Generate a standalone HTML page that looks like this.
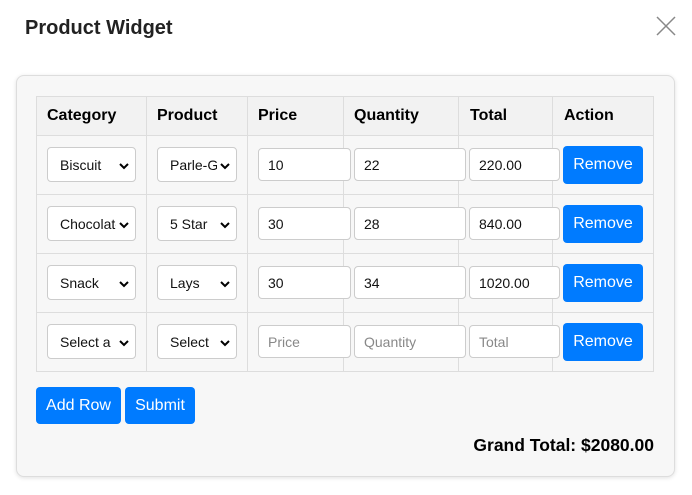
<!DOCTYPE html>
<html><head><style>
*{box-sizing:border-box;margin:0;padding:0}
body{width:692px;height:495px;background:#fff;font-family:"Liberation Sans",Arial,sans-serif;position:relative;overflow:hidden}
.a{position:absolute}
.title{left:25px;top:17px;font-size:20px;font-weight:bold;color:#222}
.card{left:16px;top:75px;width:659px;height:402px;background:#f7f7f7;border:1px solid #ddd;border-radius:8px;box-shadow:0 1px 4px rgba(0,0,0,.12)}
.hl{background:#ddd}
.th{font-weight:bold;font-size:16px;color:#000;top:107px}
.sel{height:35px;border:1px solid #ccc;border-radius:4px;background:#fff;font-size:14px;color:#111;padding-left:12px;line-height:34px;white-space:nowrap}
.sel span{display:inline-block;overflow:hidden;vertical-align:top}
.c span{width:56px}.p span{width:47px}
.sel svg{position:absolute;right:6px;top:14px}
.inp{height:33px;border:1px solid #ccc;border-radius:4px;background:#fff;font-size:14px;color:#111;padding-left:9px;line-height:33px}
.ph{color:#888}
.btn{background:#007bff;color:#fff;border-radius:4px;font-size:16px;text-align:center}
</style></head><body>
<div class="a title">Product Widget</div>
<svg class="a" style="left:656px;top:16px" width="20" height="20"><path d="M1 1L19 19M19 1L1 19" stroke="#888" stroke-width="1.5"/></svg>
<div class="a card"></div>
<div class="a" style="left:36px;top:96px;width:618px;height:40px;background:#f2f2f2"></div>
<div class="a hl" style="left:36px;top:96px;width:618px;height:1px"></div>
<div class="a hl" style="left:36px;top:135px;width:618px;height:1px"></div>
<div class="a hl" style="left:36px;top:194px;width:618px;height:1px"></div>
<div class="a hl" style="left:36px;top:253px;width:618px;height:1px"></div>
<div class="a hl" style="left:36px;top:312px;width:618px;height:1px"></div>
<div class="a hl" style="left:36px;top:371px;width:618px;height:1px"></div>
<div class="a hl" style="left:36px;top:96px;width:1px;height:276px"></div>
<div class="a hl" style="left:146px;top:96px;width:1px;height:276px"></div>
<div class="a hl" style="left:247px;top:96px;width:1px;height:276px"></div>
<div class="a hl" style="left:343px;top:96px;width:1px;height:276px"></div>
<div class="a hl" style="left:458px;top:96px;width:1px;height:276px"></div>
<div class="a hl" style="left:552px;top:96px;width:1px;height:276px"></div>
<div class="a hl" style="left:653px;top:96px;width:1px;height:276px"></div>
<div class="a th" style="left:47px">Category</div>
<div class="a th" style="left:157px">Product</div>
<div class="a th" style="left:258px">Price</div>
<div class="a th" style="left:354px">Quantity</div>
<div class="a th" style="left:470px">Total</div>
<div class="a th" style="left:564px">Action</div>

<div class="a sel c" style="left:47px;top:147px;width:89px"><span>Biscuit</span><svg width="10" height="8"><path d="M1 2L5 6L9 2" stroke="#000" stroke-width="2" fill="none"/></svg></div>
<div class="a sel p" style="left:157px;top:147px;width:80px"><span>Parle-G</span><svg width="10" height="8"><path d="M1 2L5 6L9 2" stroke="#000" stroke-width="2" fill="none"/></svg></div>
<div class="a inp" style="left:258px;top:148px;width:93px">10</div>
<div class="a inp" style="left:354px;top:148px;width:112px">22</div>
<div class="a inp" style="left:469px;top:148px;width:91px">220.00</div>
<div class="a btn" style="left:563px;top:146px;width:80px;height:38px;line-height:38px">Remove</div>

<div class="a sel c" style="left:47px;top:206px;width:89px"><span>Chocolate</span><svg width="10" height="8"><path d="M1 2L5 6L9 2" stroke="#000" stroke-width="2" fill="none"/></svg></div>
<div class="a sel p" style="left:157px;top:206px;width:80px"><span>5 Star</span><svg width="10" height="8"><path d="M1 2L5 6L9 2" stroke="#000" stroke-width="2" fill="none"/></svg></div>
<div class="a inp" style="left:258px;top:207px;width:93px">30</div>
<div class="a inp" style="left:354px;top:207px;width:112px">28</div>
<div class="a inp" style="left:469px;top:207px;width:91px">840.00</div>
<div class="a btn" style="left:563px;top:205px;width:80px;height:38px;line-height:38px">Remove</div>

<div class="a sel c" style="left:47px;top:265px;width:89px"><span>Snack</span><svg width="10" height="8"><path d="M1 2L5 6L9 2" stroke="#000" stroke-width="2" fill="none"/></svg></div>
<div class="a sel p" style="left:157px;top:265px;width:80px"><span>Lays</span><svg width="10" height="8"><path d="M1 2L5 6L9 2" stroke="#000" stroke-width="2" fill="none"/></svg></div>
<div class="a inp" style="left:258px;top:266px;width:93px">30</div>
<div class="a inp" style="left:354px;top:266px;width:112px">34</div>
<div class="a inp" style="left:469px;top:266px;width:91px">1020.00</div>
<div class="a btn" style="left:563px;top:264px;width:80px;height:38px;line-height:38px">Remove</div>

<div class="a sel c" style="left:47px;top:324px;width:89px"><span>Select a</span><svg width="10" height="8"><path d="M1 2L5 6L9 2" stroke="#000" stroke-width="2" fill="none"/></svg></div>
<div class="a sel p" style="left:157px;top:324px;width:80px"><span>Select</span><svg width="10" height="8"><path d="M1 2L5 6L9 2" stroke="#000" stroke-width="2" fill="none"/></svg></div>
<div class="a inp ph" style="left:258px;top:325px;width:93px">Price</div>
<div class="a inp ph" style="left:354px;top:325px;width:112px">Quantity</div>
<div class="a inp ph" style="left:469px;top:325px;width:91px">Total</div>
<div class="a btn" style="left:563px;top:323px;width:80px;height:38px;line-height:38px">Remove</div>

<div class="a btn" style="left:36px;top:387px;width:85px;height:37px;line-height:37px">Add Row</div>
<div class="a btn" style="left:125px;top:387px;width:70px;height:37px;line-height:37px">Submit</div>
<div class="a" style="right:38px;top:435px;font-size:17.5px;font-weight:bold;color:#000">Grand Total: $2080.00</div>
</body></html>
